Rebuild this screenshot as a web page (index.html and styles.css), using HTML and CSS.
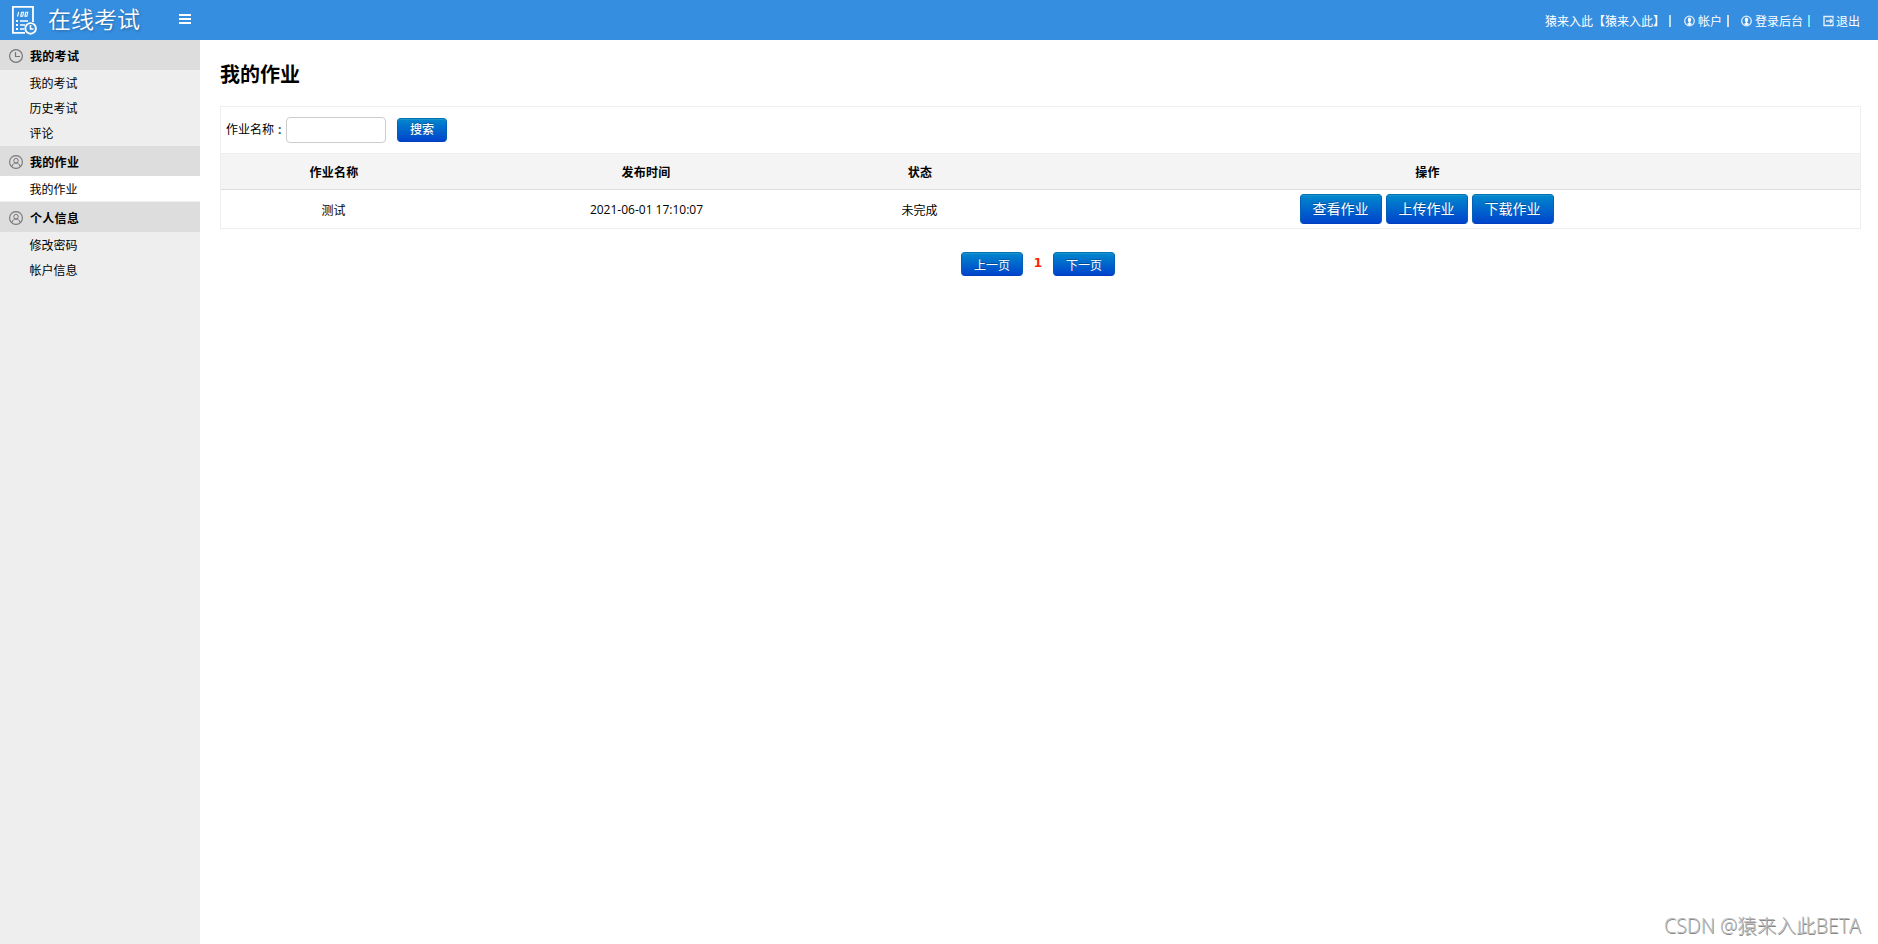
FILE: index.html
```html
<!DOCTYPE html>
<html lang="zh-CN">
<head>
<meta charset="utf-8">
<title>在线考试</title>
<link rel="stylesheet" href="styles.css">
</head>
<body>
<header class="top">
  <svg class="logo" width="28" height="32" viewBox="0 0 28 32" fill="none" stroke="#fff">
    <path d="M23 18V2.900H2.900V28.800H15" stroke-width="1.800"/>
    <path d="M8.700 8L7.500 12.500M11.500 8.300h2l-.8 4h-2zM15.700 8.300h2l-.8 4h-2z" stroke-width="1.100"/>
    <path d="M6 17h2M6 21h2M6 25h2" stroke-width="2"/>
    <path d="M10 17h8M10 21h5M10 25h4" stroke-width="1.500"/>
    <circle cx="20.600" cy="24.400" r="5.300" stroke-width="1.900"/>
    <path d="M20.500 21v4h3" stroke-width="1.500"/>
  </svg>
  <span class="brand">在线考试</span>
  <svg class="menu" width="12" height="12" viewBox="0 0 12 12" fill="#fff"><path d="M0 1h12v2H0zM0 5h12v2H0zM0 9h12v2H0z"/></svg>
  <nav class="user">
    <span class="who">猿来入此【猿来入此】</span><i class="bar b1"></i>
    <a class="link l1"><svg width="11" height="12" viewBox="0 0 11 12"><circle cx="5.500" cy="6" r="4.800" fill="none" stroke="#dcecfb" stroke-width="1.300"/><ellipse cx="5.500" cy="4.800" rx="1.700" ry="2.200" fill="#fff"/><path d="M4.700 6h1.600v2l2 1-2.800 1.500L2.700 9l2-1z" fill="#fff"/></svg><span>帐户</span></a><i class="bar b2"></i>
    <a class="link l2"><svg width="11" height="12" viewBox="0 0 11 12"><circle cx="5.500" cy="6" r="4.800" fill="none" stroke="#dcecfb" stroke-width="1.300"/><ellipse cx="5.500" cy="4.800" rx="1.700" ry="2.200" fill="#fff"/><path d="M4.700 6h1.600v2l2 1-2.800 1.500L2.700 9l2-1z" fill="#fff"/></svg><span>登录后台</span></a><i class="bar b3"></i>
    <a class="link l3"><svg width="11" height="12" viewBox="0 0 11 12" fill="none" stroke="#e4f0fb" stroke-width="1.400"><path d="M10 3.500V1.500H1v9h9v-2"/><path d="M3 6h6M7 4l2.200 2L7 8"/><path d="M10 3.500v5" stroke-opacity=".6"/></svg><span>退出</span></a>
  </nav>
</header>
<div class="body">
  <aside class="side">
    <section class="group">
      <h3 class="group-title"><svg width="14" height="14" viewBox="0 0 14 14" fill="none" stroke="#777"><circle cx="7" cy="7" r="6.400" stroke-width="1.200"/><path d="M6.500 3v4.500H11" stroke-width="1.200"/></svg><span>我的考试</span></h3>
      <a class="item">我的考试</a><a class="item">历史考试</a><a class="item">评论</a>
    </section>
    <section class="group">
      <h3 class="group-title"><svg width="14" height="14" viewBox="0 0 14 14" fill="none" stroke="#777"><circle cx="7" cy="7" r="6.400" stroke-width="1.100"/><circle cx="7" cy="5.700" r="2.300"/><path d="M3.200 11.500C3.400 9 5 8 7 8s3.600 1 3.800 3.500"/></svg><span>我的作业</span></h3>
      <a class="item active">我的作业</a>
    </section>
    <section class="group">
      <h3 class="group-title"><svg width="14" height="14" viewBox="0 0 14 14" fill="none" stroke="#777"><circle cx="7" cy="7" r="6.400" stroke-width="1.100"/><circle cx="7" cy="5.700" r="2.300"/><path d="M3.200 11.500C3.400 9 5 8 7 8s3.600 1 3.800 3.500"/></svg><span>个人信息</span></h3>
      <a class="item">修改密码</a><a class="item">帐户信息</a>
    </section>
  </aside>
  <main class="main">
    <h1 class="title">我的作业</h1>
    <div class="panel">
      <form class="search"><label class="label">作业名称<span class="colon">:</span></label><input class="field" type="text"><button class="btn search-btn" type="button">搜索</button></form>
      <div class="row head"><span>作业名称</span><span>发布时间</span><span>状态</span><span>操作</span></div>
      <div class="row data"><span>测试</span><span class="date">2021-06-01 17:10:07</span><span>未完成</span>
        <div class="actions"><button class="btn act">查看作业</button><button class="btn act">上传作业</button><button class="btn act">下载作业</button></div>
      </div>
    </div>
    <div class="pager"><button class="btn page">上一页</button><b class="current">1</b><button class="btn page">下一页</button></div>
  </main>
</div>
<div class="watermark">CSDN @猿来入此BETA</div>
</body>
</html>
```

FILE: styles.css
```css
* { box-sizing: border-box; }
body { margin: 0; height: 944px; overflow: hidden; background: #fff; color: #000; font: 12px/18px "Open Sans", "Noto Sans CJK SC", sans-serif; display: flex; flex-direction: column; }
button, input { font-family: inherit; margin: 0; }
svg { display: block; flex: none; }
.top { height: 40px; flex: none; background: #368ee0; color: #fff; display: flex; align-items: flex-start; padding-left: 10px; }
.logo { margin-top: 4px; }
.brand { width: 92px; margin: 4px 0 0 10px; font-size: 23px; line-height: 30px; font-weight: 350; white-space: nowrap; text-shadow: 1px 1px 3px rgba(0,0,0,.3); }
.menu { margin: 13px 0 0 39px; }
.user { margin-left: auto; padding: 13px 18px 0 0; display: flex; white-space: nowrap; }
.who { width: 120px; }
.bar { width: 2px; height: 12px; margin-top: 2px; background: #bfe0ee; }
.b1 { margin-left: 4px; }
.b2 { margin-left: 5px; background: #dcdde0; }
.b3 { margin-left: 5px; background: #72e8ff; }
.link { display: flex; gap: 3px; }
.link svg { margin-top: 2px; }
.l1 { margin-left: 13px; }
.l2 { margin-left: 12px; }
.l3 { margin-left: 13px; gap: 2px; }
.body { flex: 1; display: flex; }
.side { width: 200px; flex: none; background: #eee; }
.group + .group { margin-top: 1px; }
.group-title { height: 30px; margin: 0; padding: 2px 0 0 9px; display: flex; align-items: center; gap: 7px; background: #ddd; font-size: 12px; font-weight: 700; letter-spacing: .3px; }
.group-title svg { margin-top: -1px; }
.group-title span { margin-top: 1px; }
.item { display: block; height: 25px; line-height: 28px; padding-left: 29.500px; }
.active { background: #fff; }
.main { flex: 1; padding: 20px 17px 0 20px; }
.title { margin: 0; height: 46px; font-size: 20px; line-height: 30px; font-weight: 700; }
.panel { border: 1px solid #eee; }
.search { height: 46px; padding-left: 5px; display: flex; align-items: flex-start; }
.label { width: 60px; margin-top: 14px; white-space: nowrap; }
.colon { color: #2b526c; font-weight: 700; margin-left: 4px; }
.field { width: 100px; height: 26px; margin-top: 10px; border: 1px solid #ccc; border-radius: 4px; background: #fff; }
.btn { border: 1px solid #0460b4; border-top-color: #0072b0; border-bottom-color: #003fbd; border-radius: 4px; padding: 0; background: linear-gradient(#0088cc, #0044cc); color: #fff; text-shadow: 0 -1px 0 rgba(0,0,0,.25); white-space: nowrap; box-shadow: inset 0 1px 0 rgba(255,255,255,.1); }
.search-btn { width: 50px; height: 24px; margin: 11px 0 0 11px; font-size: 12px; font-weight: 500; line-height: 22px; }
.row { display: grid; grid-template-columns: 226px 398px 150px 1fr; align-items: center; text-align: center; }
.head { height: 37px; background: #f4f4f4; border-top: 1px solid #eee; border-bottom: 1px solid #ddd; font-weight: 700; letter-spacing: .3px; }
.head > span { padding-top: 2px; }
.data { height: 38px; }
.data > span { padding: 3px 1px 0 0; }
.data > .date { padding: 2px 0 0 1px; }
.actions { display: flex; justify-content: center; gap: 4px; padding-right: 2px; }
.act { width: 82px; height: 30px; font-size: 14px; line-height: 28px; }
.pager { margin-top: 23px; display: flex; justify-content: center; width: 1636px; align-items: flex-start; }
.page { width: 62px; height: 24px; font-size: 12px; line-height: 25px; }
.current { width: 30px; text-align: center; color: #f20; line-height: 22px; font-family: "DejaVu Sans", sans-serif; }
.watermark { position: absolute; left: 1664px; top: 911px; font-size: 19.600px; line-height: 30px; color: #bbb; white-space: nowrap; text-shadow: .7px .7px 0 #888; font-weight: 300; }
```
